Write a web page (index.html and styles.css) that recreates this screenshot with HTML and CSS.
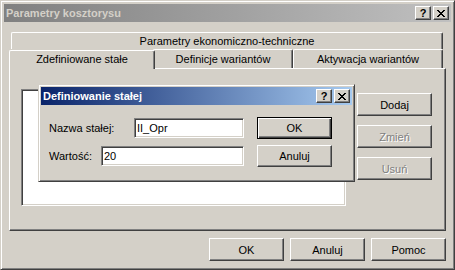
FILE: index.html
```html
<!DOCTYPE html>
<html lang="pl">
<head>
  <meta charset="UTF-8">
  <meta name="viewport" content="width=device-width, initial-scale=1.0">
  <title>Parametry kosztorysu</title>
  <link rel="stylesheet" href="styles.css">
</head>
<body>
  <div class="window">
    <div class="titlebar inactive">
      <span class="title">Parametry kosztorysu</span>
      <div class="title-buttons">
        <button class="tbtn help">?</button>
        <button class="tbtn close">
          <svg width="8" height="7" viewBox="0 0 8 7" shape-rendering="crispEdges"><path d="M0 0h2v1H0zM6 0h2v1H6zM1 1h2v1H1zM5 1h2v1H5zM2 2h4v1H2zM3 3h2v1H3zM2 4h4v1H2zM1 5h2v1H1zM5 5h2v1H5zM0 6h2v1H0zM6 6h2v1H6z" fill="#000"/></svg>
        </button>
      </div>
    </div>

    <div class="content">
      <div class="tabs">
        <div class="tab-row back">
          <div class="tab wide">Parametry ekonomiczno-techniczne</div>
        </div>
        <div class="tab-row front">
          <div class="tab selected t1">Zdefiniowane stałe</div>
          <div class="tab t2">Definicje wariantów</div>
          <div class="tab t3">Aktywacja wariantów</div>
        </div>
      </div>

      <div class="panel">
        <div class="listbox"></div>
        <div class="side-buttons">
          <button class="btn">Dodaj</button>
          <button class="btn" disabled>Zmień</button>
          <button class="btn" disabled>Usuń</button>
        </div>
      </div>

      <div class="footer">
        <button class="btn">OK</button>
        <button class="btn">Anuluj</button>
        <button class="btn">Pomoc</button>
      </div>
    </div>

    <div class="dialog">
      <div class="titlebar active">
        <span class="title">Definiowanie stałej</span>
        <div class="title-buttons">
          <button class="tbtn help">?</button>
          <button class="tbtn close">
            <svg width="8" height="7" viewBox="0 0 8 7" shape-rendering="crispEdges"><path d="M0 0h2v1H0zM6 0h2v1H6zM1 1h2v1H1zM5 1h2v1H5zM2 2h4v1H2zM3 3h2v1H3zM2 4h4v1H2zM1 5h2v1H1zM5 5h2v1H5zM0 6h2v1H0zM6 6h2v1H6z" fill="#000"/></svg>
          </button>
        </div>
      </div>
      <div class="dialog-body">
        <div class="fields">
          <div class="field">
            <label class="name-label" for="constName">Nazwa stałej:</label>
            <input class="edit" type="text" id="constName" value="II_Opr">
          </div>
          <div class="field">
            <label class="value-label" for="constValue">Wartość:</label>
            <input class="edit" type="text" id="constValue" value="20">
          </div>
        </div>
        <div class="dialog-buttons">
          <button class="btn default">OK</button>
          <button class="btn">Anuluj</button>
        </div>
      </div>
    </div>
  </div>
</body>
</html>
```

FILE: styles.css
```css
body {
  margin: 0;
  background: #d4d0c8;
  font-family: "Liberation Sans", Arial, sans-serif;
  font-size: 11px;
  color: #000;
}
.window {
  position: relative;
  width: 455px;
  height: 270px;
  box-sizing: border-box;
  padding: 3px;
  background: #d4d0c8;
  border: 1px solid;
  border-color: #d4d0c8 #404040 #404040 #d4d0c8;
  box-shadow: inset 1px 1px #fff, inset -1px -1px #808080;
}
.titlebar {
  height: 18px;
  display: flex;
  align-items: center;
  justify-content: space-between;
  padding-left: 2px;
}
.titlebar.inactive {
  background: linear-gradient(to right, #808080, #c0c0c0);
  color: #d4d0c8;
}
.titlebar.active {
  background: linear-gradient(to right, #0a246a, #a6caf0);
  color: #fff;
}
.title {
  font-weight: bold;
  font-size: 11px;
}
.title-buttons {
  display: flex;
  gap: 2px;
  margin-right: 2px;
}
.tbtn {
  width: 16px;
  height: 14px;
  padding: 0;
  margin: 0;
  display: flex;
  align-items: center;
  justify-content: center;
  background: #d4d0c8;
  border: 1px solid;
  border-color: #fff #404040 #404040 #fff;
  box-shadow: inset -1px -1px #808080;
  font-family: "Liberation Sans", Arial, sans-serif;
  font-weight: bold;
  font-size: 11px;
  line-height: 12px;
  color: #000;
}
.tbtn svg {
  display: block;
}

.content {
  padding: 10px 5px 0 5px;
}
.tabs {
  display: flex;
  flex-direction: column;
}
.tab-row {
  display: flex;
  padding: 0 3px 0 2px;
}
.tab-row.back {
  height: 17px;
}
.tab-row.front {
  height: 19px;
  align-items: flex-end;
}
.tab {
  box-sizing: border-box;
  background: #d4d0c8;
  border-top: 1px solid #fff;
  border-left: 1px solid #fff;
  border-right: 1px solid #404040;
  box-shadow: inset -1px 0 #808080;
  border-radius: 2px 2px 0 0;
  display: flex;
  align-items: center;
  justify-content: center;
  white-space: nowrap;
}
.tab.wide {
  flex: 1;
  height: 17px;
}
.tab-row.front .tab {
  height: 19px;
}
.tab.t1 { width: 142px; }
.tab.t2 { width: 140px; }
.tab.t3 { width: 150px; }
.tab.selected {
  position: relative;
  z-index: 1;
  height: 22px;
  width: 146px;
  margin: 0 -2px -1px -2px;
  padding-bottom: 2px;
}

.panel {
  height: 163px;
  box-sizing: border-box;
  display: flex;
  align-items: flex-start;
  padding: 20px 0 0 11px;
  border: 1px solid;
  border-color: #fff #404040 #404040 #fff;
  box-shadow: inset -1px -1px #808080;
}
.listbox {
  width: 325px;
  height: 117px;
  box-sizing: border-box;
  background: #fff;
  border: 1px solid;
  border-color: #808080 #fff #fff #808080;
  box-shadow: inset 1px 1px #404040, inset -1px -1px #d4d0c8;
}
.side-buttons {
  display: flex;
  flex-direction: column;
  gap: 9px;
  margin: 4px 0 0 11px;
}

.btn {
  width: 75px;
  height: 23px;
  padding: 0;
  margin: 0;
  box-sizing: border-box;
  background: #d4d0c8;
  border: 1px solid;
  border-color: #fff #404040 #404040 #fff;
  box-shadow: inset -1px -1px #808080;
  font-family: "Liberation Sans", Arial, sans-serif;
  font-size: 11px;
  color: #000;
}
.btn:disabled {
  color: #808080;
  text-shadow: 1px 1px #fff;
}
.btn.default {
  border: 1px solid #000;
  box-shadow: inset 1px 1px #fff, inset -1px -1px #404040, inset -2px -2px #808080;
}

.footer {
  display: flex;
  justify-content: flex-end;
  gap: 6px;
  padding-top: 7px;
}

.dialog {
  position: absolute;
  left: 37px;
  top: 83px;
  width: 317px;
  height: 98px;
  box-sizing: border-box;
  padding: 2px;
  background: #d4d0c8;
  border: 1px solid;
  border-color: #d4d0c8 #404040 #404040 #d4d0c8;
  box-shadow: inset 1px 1px #fff, inset -1px -1px #808080;
}
.dialog-body {
  display: flex;
  justify-content: space-between;
  padding: 12px 20px 0 8px;
}
.fields {
  display: flex;
  flex-direction: column;
  gap: 8px;
  padding-top: 1px;
}
.field {
  display: flex;
  align-items: center;
}
.name-label { width: 85px; }
.value-label { width: 52px; }
.edit {
  box-sizing: border-box;
  height: 20px;
  margin: 0;
  padding: 1px 2px;
  background: #fff;
  border: 1px solid;
  border-color: #808080 #fff #fff #808080;
  box-shadow: inset 1px 1px #404040, inset -1px -1px #d4d0c8;
  font-family: "Liberation Sans", Arial, sans-serif;
  font-size: 11px;
  color: #000;
  outline: none;
}
#constName { width: 110px; }
#constValue { width: 143px; }
.dialog-buttons {
  display: flex;
  flex-direction: column;
  gap: 6px;
}
.dialog-buttons .btn {
  height: 22px;
}
```
